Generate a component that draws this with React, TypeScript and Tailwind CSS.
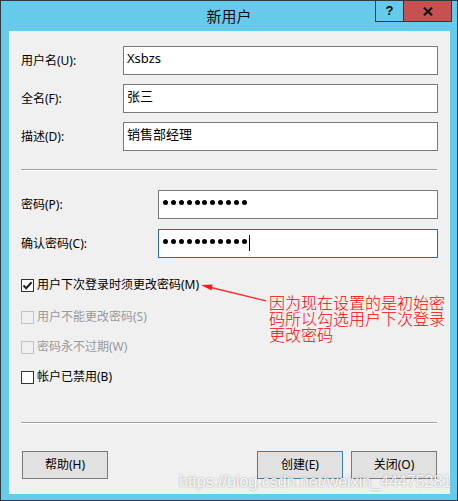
import React from "react";

function Dots({ n }: { n: number }) {
  return (
    <div className="flex gap-[2.9px]">
      {Array.from({ length: n }).map((_, i) => (
        <div key={i} className="w-[5px] h-[5px] rounded-full bg-black" />
      ))}
    </div>
  );
}

function CheckRow({
  label,
  checked,
  disabled,
  className,
}: {
  label: string;
  checked?: boolean;
  disabled?: boolean;
  className?: string;
}) {
  return (
    <div className={"flex items-center h-[20px] " + (className ?? "")}>
      <div
        className={
          "w-[13px] h-[13px] border flex items-center justify-center " +
          (disabled ? "border-[#c4c4c4] bg-[#f0f0f0]" : "border-[#333333] bg-white")
        }
      >
        {checked && (
          <svg width="11" height="11" viewBox="0 0 11 11">
            <path d="M1.5 5.5 L4.2 8.3 L9.6 2.2" fill="none" stroke="#222" strokeWidth="2.1" />
          </svg>
        )}
      </div>
      <span className={"ml-[3px] " + (disabled ? "text-[#9a9a9a]" : "text-black")}>{label}</span>
    </div>
  );
}

function Btn({ label, primary }: { label: string; primary?: boolean }) {
  return (
    <div
      className={
        "w-[86px] h-[28px] flex items-center justify-center bg-[#e1e1e1] border " +
        (primary ? "border-[#3c7fb1]" : "border-[#7a7a7a]")
      }
    >
      {label}
    </div>
  );
}

export default function App() {
  return (
    <div className="relative w-[458px] h-[501px] bg-[#66cbea] border border-[#2d3a42] flex flex-col font-['Noto_Sans','Noto_Sans_CJK_SC',sans-serif] text-[12px] text-black overflow-hidden">
      {/* title bar */}
      <div className="h-[30px] flex items-center justify-center shrink-0">
        <span className="text-[15px] text-[#111] font-['Noto_Sans_CJK_SC',sans-serif]">新用户</span>
      </div>
      <div className="absolute top-[-1px] right-[5px] flex h-[22px]">
        <div className="w-[29px] h-[22px] border border-[#2d3a42] bg-[#66cbea] flex items-center justify-center font-bold text-[13px] font-['Liberation_Sans',sans-serif]">
          ?
        </div>
        <div className="w-[48px] h-[22px] border border-l-0 border-[#2d3a42] bg-[#c75050] flex items-center justify-center">
          <svg width="10" height="9" viewBox="0 0 10 9">
            <path d="M1 0.8 L9 8.2 M9 0.8 L1 8.2" stroke="#111" strokeWidth="2.2" />
          </svg>
        </div>
      </div>

      {/* content */}
      <div className="ml-[8px] mr-[7px] mb-[6px] flex-1 bg-[#f0f0f0] flex flex-col px-[12px] pt-[15px]">
        <div className="flex flex-col gap-[9px]">
          {[
            ["用户名(U):", "Xsbzs"],
            ["全名(F):", "张三"],
            ["描述(D):", "销售部经理"],
          ].map(([l, v]) => (
            <div key={l} className="flex items-center h-[29px]">
              <div className="w-[102px]">{l}</div>
              <div className="flex-1 h-[29px] bg-white border border-[#7a7a7a] pl-[3px] pt-[2px] text-[13px] leading-[18px]">
                {v}
              </div>
            </div>
          ))}
        </div>

        <div className="mt-[18px] h-px bg-[#a0a0a0] mr-px" />
        <div className="h-px bg-white mr-px" />

        <div className="mt-[19px] flex flex-col gap-[10px]">
          <div className="flex items-center h-[29px]">
            <div className="w-[137px]">密码(P):</div>
            <div className="flex-1 h-[29px] bg-white border border-[#7a7a7a] pl-[4px] pb-[5px] flex items-center">
              <Dots n={11} />
            </div>
          </div>
          <div className="flex items-center h-[29px]">
            <div className="w-[137px]">确认密码(C):</div>
            <div className="flex-1 h-[29px] bg-white border border-[#2f6a9c] pl-[4px] pb-[5px] flex items-center">
              <Dots n={11} />
              <div className="ml-[2px] mt-[4px] w-px h-[16px] bg-black" />
            </div>
          </div>
        </div>

        <CheckRow className="mt-[17px]" label="用户下次登录时须更改密码(M)" checked />
        <CheckRow className="mt-[12px]" label="用户不能更改密码(S)" disabled />
        <CheckRow className="mt-[10px]" label="密码永不过期(W)" disabled />
        <CheckRow className="mt-[10px]" label="帐户已禁用(B)" />

        <div className="mt-[35px] h-px bg-[#a0a0a0] mr-px" />
        <div className="h-px bg-white mr-px" />

        <div className="mt-[27px] flex px-px">
          <Btn label="帮助(H)" />
          <div className="flex-1" />
          <div className="flex gap-[8px]">
            <Btn label="创建(E)" primary />
            <Btn label="关闭(O)" />
          </div>
        </div>
      </div>

      {/* annotation arrow */}
      <svg
        className="absolute left-[-1px] top-[-1px] pointer-events-none"
        width="458"
        height="501"
        viewBox="0 0 458 501"
      >
        <line x1="211" y1="287.5" x2="266" y2="300.8" stroke="#ff2a2a" strokeWidth="1.3" />
        <polygon points="201,285 212.5,284.6 211.6,290.6" fill="#ff1a1a" />
      </svg>
      <div className="absolute left-[268px] top-[293px] flex flex-col text-[16px] leading-[16px] text-[#ff0000] whitespace-nowrap font-['Noto_Sans_CJK_SC',sans-serif] font-light">
        <div className="h-[16px]">因为现在设置的是初始密</div>
        <div className="h-[16px]">码所以勾选用户下次登录</div>
        <div className="h-[16px]">更改密码</div>
      </div>

      {/* watermark */}
      <div className="absolute left-[178px] top-[473px] text-[16px] leading-[16px] font-['Liberation_Sans',sans-serif] text-white/90 [text-shadow:0_0_2px_rgba(0,0,0,0.4)] whitespace-nowrap pointer-events-none">
        https://blog.csdn.net/weixin_44475281
      </div>
    </div>
  );
}
